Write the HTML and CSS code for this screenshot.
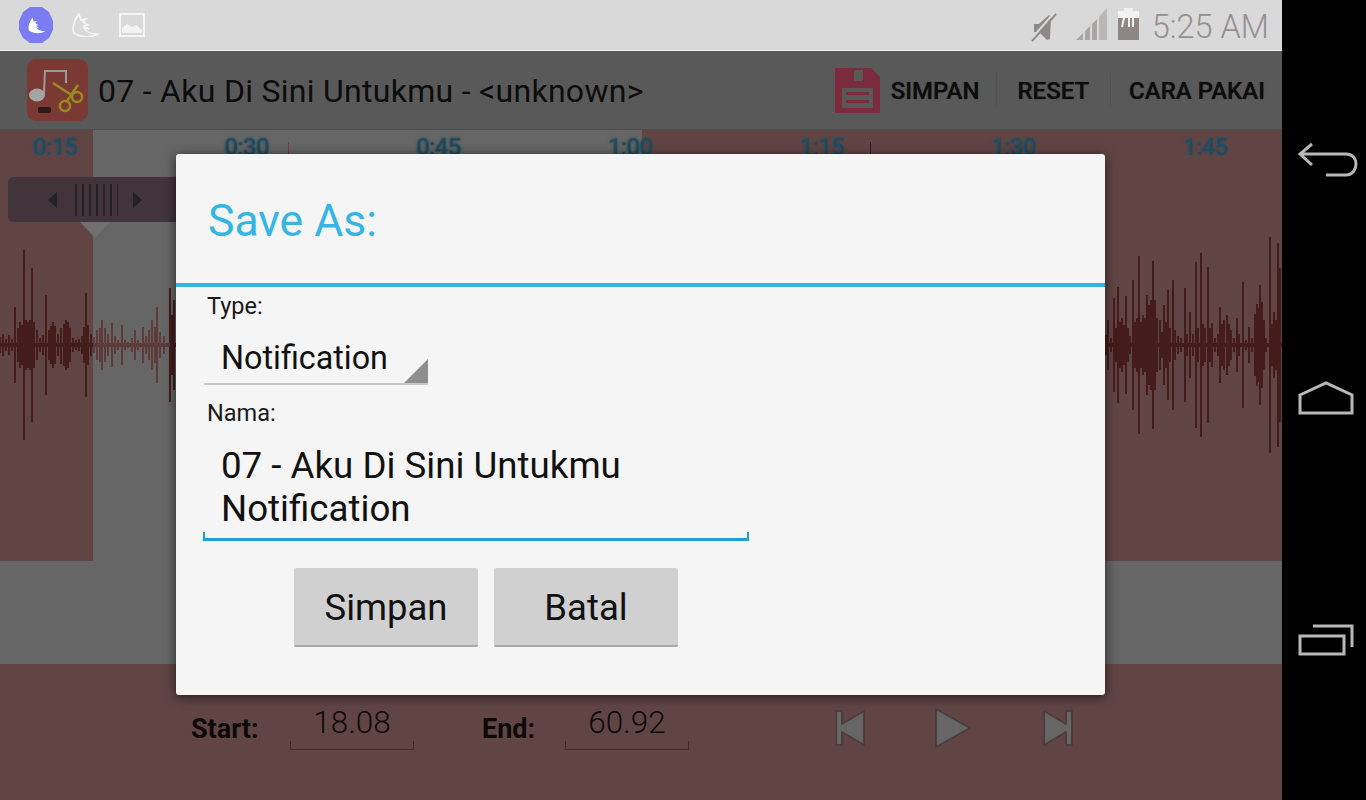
FILE: index.html
```html
<html>

<head>
  <link rel="stylesheet" href="styles.css">
</head>

<body>
  <div class="screen">
    <div class="status-bar">
      <div class="status-left">
        <svg class="notif-badge" viewBox="0 0 34 36">
          <path fill="#7c7cf2" d="M11 0h12l7 5 4 9v9l-4 8-7 5H11l-7-5-4-8v-9l4-9z" />
          <path fill="#fff" transform="translate(8 10) scale(.68)" d="M8 1C3 8 1 15 3 20c7 5 17 5 24 1-7 0-12-2-14-6l5 1-5-3 4-1-5-3 3-3-5 1z" />
        </svg>
        <svg class="notif-bird" viewBox="0 0 28 24">
          <path fill="none" stroke="#f4f4f4" stroke-width="1.6" d="M8 1C3 8 1 15 3 20c7 5 17 5 24 1-7 0-12-2-14-6l5 1-5-3 4-1-5-3 3-3-5 1z" />
        </svg>
        <svg class="notif-image" viewBox="0 0 26 24">
          <rect x="1" y="1" width="24" height="22" fill="none" stroke="#f4f4f4" stroke-width="2" />
          <path fill="#f4f4f4" d="M3 20v-5l5-4 5 3 4-2 6 5v3z" />
        </svg>
      </div>
      <div class="status-right">
        <svg class="icon-mute" viewBox="0 0 26 30">
          <path fill="#8f8888" d="M3 12h5l10-9 2 2-1 22-3 1-8-8H3z" />
          <path stroke="#8f8888" stroke-width="2" d="M1 29 25 2" />
          <path stroke="#d9d9d9" stroke-width="2" d="M1 26 23 1" />
        </svg>
        <svg class="icon-signal" viewBox="0 0 31 32">
          <path fill="#aaa5a5" d="M0 32 7 25v7zM9 23l5-5v14H9zM16 16l5-5v21h-5z" />
          <path fill="#bbb7b7" d="M23 9l8-9v32h-8z" />
        </svg>
        <svg class="icon-battery" viewBox="0 0 21 32">
          <path fill="#f2f2f2" d="M6 0h9v3h6v7H0V3h6z" />
          <path fill="#8e8585" d="M0 10h21v22H0z" />
          <path stroke="#f2f2f2" stroke-width="2" d="M6 10 4 19M11 10v9M15 10v9" />
        </svg>
        <span class="clock">5:25 AM</span>
      </div>
    </div>

    <div class="action-bar">
      <svg class="app-icon" viewBox="0 0 61 62">
        <rect width="61" height="62" rx="9" fill="#7b3933" />
        <path fill="none" stroke="#9b9b9b" stroke-width="2" d="M17 34 18 12h21v12" />
        <ellipse cx="10" cy="36" rx="8" ry="6.5" fill="#a5a5a5" />
        <path fill="none" stroke="#9a8a20" stroke-width="2.5" d="M26 24 46 37M51 26 40 42" />
        <circle cx="38" cy="47" r="5" fill="none" stroke="#9a8a20" stroke-width="2.5" />
        <circle cx="50" cy="38" r="5" fill="none" stroke="#9a8a20" stroke-width="2.5" />
        <rect x="11" y="48" width="13" height="6" rx="2" fill="#2c1a18" />
      </svg>
      <div class="track-title">07 - Aku Di Sini Untukmu - &lt;unknown&gt;</div>
      <div class="actions">
        <svg class="save-icon" viewBox="0 0 45 45">
          <path fill="#7b2b3b" d="M0 0h36l9 9v36H0z" />
          <rect x="19" y="2" width="9" height="11" fill="#595959" />
          <rect x="7" y="20" width="31" height="20" fill="#595959" />
          <rect x="11" y="24" width="23" height="3" fill="#7b2b3b" />
          <rect x="11" y="32" width="23" height="3" fill="#7b2b3b" />
        </svg>
        <button class="action-btn btn-save">SIMPAN</button>
        <button class="action-btn btn-reset">RESET</button>
        <button class="action-btn btn-help">CARA PAKAI</button>
      </div>
    </div>

    <div class="main">
      <div class="wave-area">
        <div class="region-off first"></div>
        <div class="region-on"></div>
        <div class="region-off"></div>

        <div class="time-labels">
          <span>0:15</span><span>0:30</span><span>0:45</span><span>1:00</span><span>1:15</span><span>1:30</span><span>1:45</span>
        </div>
        <div class="tick tick-a"></div>
        <div class="tick tick-b"></div>

        <svg class="waveform" viewBox="0 0 1282 431">
          <path class="wave-dark" d="M0 207V223M3 204V226M6 209V221M9 205V225M12 209V221M15 177V253M18 198V232M20 192V238M22 195V235M24 120V310M26 190V240M28 192V238M30 190V240M32 138V292M34 192V238M37 200V230M40 208V222M43 205V225M46 165V265M49 200V230M51 196V234M53 192V238M55 196V234M58 204V226M61 198V234M64 194V236M66 190V240M68 192V238M70 198V232M73 208V222M76 210V220M79 209V221M82 206V224M84 197V233M86 163V267M88 195V235M91 204V226" />
          <path class="wave-light" d="M94 207V223M97 200V230M100 198V232M102 190V240M105 198V232M108 204V226M112 193V237M115 206V224M118 210V220M122 195V235M125 210V220M128 212V218M132 208V222M135 200V230M138 210V220M143 197V233M146 206V224M149 200V230M152 190V240M155 197V233M157 177V253M160 202V228M164 206V224" />
          <path class="wave-dark" d="M170 158V272M172 185V245M174 170V260" />
          <path class="wave-dark" d="M1106 205V225M1108 190V240M1111 208V222M1114 168V262M1116 198V232M1118 157V273M1120 192V238M1122 188V242M1124 195V235M1126 166V264M1128 198V232M1130 206V224M1133 150V280M1135 192V238M1137 188V242M1139 126V304M1141 192V238M1143 185V245M1145 188V242M1147 165V265M1149 175V255M1151 170V260M1153 131V299M1155 170V260M1157 188V242M1160 190V240M1162 202V228M1164 175V255M1166 192V238M1168 160V270M1170 198V232M1173 150V280M1175 200V230M1178 206V224M1181 208V222M1185 158V272M1187 204V226M1190 182V248M1193 204V226M1196 132V298M1198 198V232M1201 123V307M1203 194V236M1205 198V232M1208 137V293M1210 198V232M1212 193V237M1215 208V222M1218 204V226M1220 177V253M1222 194V236M1224 190V240M1227 185V245M1229 194V236M1231 200V230M1234 208V222M1237 188V242M1239 204V226M1243 152V278M1246 210V220M1249 197V233M1252 208V222M1255 184V246M1257 174V256M1259 178V252M1260 155V275M1262 172V258M1264 190V240M1266 208V222M1270 107V323M1272 194V236M1274 182V248M1276 190V240M1278 113V317M1280 138V292" />
          <path class="wave-mid" d="M0 215H93M170 215H176M1105 215H1282" />
          <path class="wave-mid-light" d="M93 215H170" />
        </svg>

        <div class="slider-handle">
          <span class="arrow-left"></span>
          <span class="grip"></span>
          <span class="arrow-right"></span>
        </div>
        <div class="handle-pointer"></div>
      </div>

      <div class="band"></div>

      <div class="controls">
        <label class="ctl-label start-label">Start:</label>
        <div class="ctl-field start-field">18.08</div>
        <label class="ctl-label end-label">End:</label>
        <div class="ctl-field end-field">60.92</div>
        <div class="transport">
          <svg class="transport-btn" viewBox="0 0 32 38">
            <path class="transport-shape" d="M2 2h6v13L30 2v34L8 23v13H2z" />
          </svg>
          <svg class="transport-btn play" viewBox="0 0 38 42">
            <path class="transport-shape" d="M2 2 36 21 2 40z" />
          </svg>
          <svg class="transport-btn" viewBox="0 0 32 38">
            <path class="transport-shape" d="M30 2h-6v13L2 2v34l22-13v13h6z" />
          </svg>
        </div>
      </div>
    </div>

    <div class="dialog">
      <div class="dialog-title">Save As:</div>
      <div class="dialog-body">
        <div class="field-label">Type:</div>
        <div class="spinner">Notification</div>
        <div class="field-label name-label">Nama:</div>
        <div class="edit-text">07 - Aku Di Sini Untukmu<br>Notification</div>
        <div class="dialog-buttons">
          <button class="dialog-btn">Simpan</button>
          <button class="dialog-btn">Batal</button>
        </div>
      </div>
    </div>
  </div>

  <div class="nav-bar">
    <svg class="nav-back" viewBox="0 0 60 36">
      <path fill="none" stroke="#b8b8b8" stroke-width="3" d="M14 2 2 12l12 11M3 12h45c7 0 10 5 10 10s-3 11-10 11H28" />
    </svg>
    <svg class="nav-home" viewBox="0 0 56 34">
      <path fill="none" stroke="#b8b8b8" stroke-width="3" d="M2 14 28 2l26 12v18H2z" />
    </svg>
    <svg class="nav-recent" viewBox="0 0 56 32">
      <path fill="none" stroke="#b8b8b8" stroke-width="3" d="M15 2h39v21M2 12h44v18H2z" />
    </svg>
  </div>
</body>

</html>
```

FILE: styles.css
```css
body {
  margin: 0;
  width: 1366px;
  height: 800px;
  display: flex;
  overflow: hidden;
  font-family: Roboto, "Liberation Sans", sans-serif;
  background-color: black;
}

.screen {
  position: relative;
  width: 1282px;
  height: 800px;
  display: flex;
  flex-direction: column;
}

/* status bar */
.status-bar {
  height: 51px;
  box-sizing: border-box;
  background-color: #d9d9d9;
  border-bottom: 1px solid #efefef;
  display: flex;
  justify-content: space-between;
  align-items: center;
}

.status-left {
  display: flex;
  align-items: center;
  padding-left: 19px;
}

.notif-badge {
  width: 34px;
  height: 36px;
}

.notif-bird {
  width: 28px;
  height: 24px;
  margin-left: 18px;
}

.notif-image {
  width: 26px;
  height: 24px;
  margin-left: 20px;
}

.status-right {
  display: flex;
  align-items: center;
  padding-right: 13px;
}

.icon-mute {
  width: 26px;
  height: 30px;
  margin-top: 3px;
}

.icon-signal {
  width: 31px;
  height: 32px;
  margin-left: 19px;
  margin-top: -2px;
}

.icon-battery {
  width: 21px;
  height: 32px;
  margin-left: 11px;
  margin-top: -2px;
}

.clock {
  margin-left: 13px;
  padding-top: 3px;
  font-size: 32.5px;
  font-weight: 300;
  color: #958f8f;
}

/* action bar */
.action-bar {
  height: 79px;
  box-sizing: border-box;
  background-color: #595959;
  border-bottom: 1px solid #4c4c4c;
  display: flex;
  align-items: center;
  padding-left: 27px;
}

.app-icon {
  width: 61px;
  height: 62px;
}

.track-title {
  margin-left: 10px;
  padding-top: 2px;
  font-size: 32px;
  color: #0c0c0c;
  letter-spacing: 0.28px;
  white-space: nowrap;
}

.actions {
  margin-left: auto;
  display: flex;
  align-items: center;
  height: 100%;
  padding-right: 17px;
}

.save-icon {
  width: 45px;
  height: 45px;
  margin-right: 11px;
}

.action-btn {
  background: none;
  border: none;
  padding: 2px 0 0;
  font-family: inherit;
  font-size: 24px;
  font-weight: 500;
  color: #0c0c0c;
  text-shadow: 0 0 1px rgba(0, 0, 0, 0.6);
  height: 34px;
}

.btn-reset,
.btn-help {
  border-left: 1px solid #525252;
}

.btn-reset {
  margin-left: 17px;
  padding-left: 20px;
}

.btn-help {
  margin-left: 21px;
  padding-left: 18px;
}

/* waveform area */
.main {
  flex: 1;
  display: flex;
  flex-direction: column;
}

.wave-area {
  position: relative;
  height: 431px;
  display: flex;
  background-color: #614545;
}

.region-off {
  flex: 1;
}

.region-off.first {
  flex: none;
  width: 93px;
}

.region-on {
  width: 549px;
  background-color: #666666;
}

.time-labels {
  position: absolute;
  top: 3px;
  left: -41px;
  display: flex;
}

.time-labels span {
  width: 191.7px;
  text-align: center;
  font-size: 24px;
  font-weight: 500;
  letter-spacing: -0.7px;
  color: #1f4c60;
  text-shadow: 0 0 3px #2d4a55;
}

.tick {
  position: absolute;
  top: 12px;
  width: 1px;
  height: 13px;
  background-color: #7d3a3a;
}

.tick-a {
  left: 288px;
}

.tick-b {
  left: 870px;
  background-color: #3a1414;
}

.waveform {
  position: absolute;
  top: 0;
  left: 0;
  width: 1282px;
  height: 431px;
}

.wave-dark {
  fill: none;
  stroke: #451c1c;
  stroke-width: 2;
}

.wave-light {
  fill: none;
  stroke: #5f3a3a;
  stroke-width: 2;
}

.wave-mid {
  fill: none;
  stroke: #451c1c;
  stroke-width: 4;
}

.wave-mid-light {
  fill: none;
  stroke: #5f3a3a;
  stroke-width: 4;
}

.slider-handle {
  position: absolute;
  top: 47px;
  left: 8px;
  width: 190px;
  height: 45px;
  box-sizing: border-box;
  background-color: #41343a;
  border-radius: 5px;
  display: flex;
  align-items: center;
  padding-left: 40px;
}

.arrow-left {
  width: 0;
  height: 0;
  border-top: 8px solid transparent;
  border-bottom: 8px solid transparent;
  border-right: 9px solid #262024;
}

.arrow-right {
  width: 0;
  height: 0;
  margin-left: 15px;
  border-top: 8px solid transparent;
  border-bottom: 8px solid transparent;
  border-left: 9px solid #262024;
}

.grip {
  width: 43px;
  height: 32px;
  margin-left: 18px;
  background: repeating-linear-gradient(90deg, #262024 0 2px, transparent 2px 7px);
}

.handle-pointer {
  position: absolute;
  top: 92px;
  left: 80px;
  width: 0;
  height: 0;
  border-left: 15px solid transparent;
  border-right: 15px solid transparent;
  border-top: 16px solid #707070;
}

.band {
  height: 103px;
  background-color: #666666;
}

/* start / end row */
.controls {
  flex: 1;
  background-color: #614545;
  position: relative;
  display: flex;
  padding-left: 191px;
}

.ctl-label {
  font-size: 27px;
  font-weight: 700;
  color: #0d0909;
  margin-top: 49px;
  height: 32px;
}

.start-label {
  width: 99px;
}

.end-label {
  width: 83px;
  margin-left: 68px;
}

.ctl-field {
  width: 124px;
  height: 47px;
  box-sizing: border-box;
  margin-top: 39px;
  padding-top: 1px;
  font-size: 31.5px;
  font-weight: 300;
  line-height: 38px;
  text-align: center;
  color: #0d0909;
  border: 1px solid #3f2d2d;
  border-top: none;
  border-image: linear-gradient(to bottom, transparent 82%, #3f2d2d 82%) 1;
}

.transport {
  display: flex;
  align-items: center;
  margin-left: 145px;
  margin-top: 42px;
  height: 44px;
}

.transport-btn {
  width: 32px;
  height: 38px;
}

.transport-btn.play {
  width: 38px;
  height: 42px;
  margin-left: 68px;
  margin-right: 70px;
}

.transport-shape {
  fill: #666666;
  stroke: #4d3d3d;
  stroke-width: 2;
  stroke-linejoin: round;
}

/* dialog */
.dialog {
  position: absolute;
  top: 154px;
  left: 176px;
  width: 929px;
  height: 541px;
  background-color: #f5f5f5;
  border-radius: 3px;
  box-shadow: 0 2px 12px rgba(0, 0, 0, 0.65);
}

.dialog-title {
  height: 133px;
  box-sizing: border-box;
  padding: 41px 0 0 32px;
  font-size: 44.5px;
  line-height: 52px;
  color: #33b5e5;
  border-bottom: 4px solid #33b5e5;
}

.dialog-body {
  padding: 4px 0 0 28px;
}

.field-label {
  padding-left: 3px;
  font-size: 23.5px;
  line-height: 30px;
  color: #1a1a1a;
}

.name-label {
  margin-top: 13px;
}

.spinner {
  position: relative;
  width: 224px;
  height: 64px;
  box-sizing: border-box;
  padding: 17px 0 0 17px;
  font-size: 32.3px;
  line-height: 40px;
  color: #111111;
  border-bottom: 2px solid #c8c8c8;
}

.spinner::after {
  content: "";
  position: absolute;
  right: 0;
  bottom: 0;
  width: 0;
  height: 0;
  border-left: 24px solid transparent;
  border-bottom: 24px solid #8e8e8e;
}

.edit-text {
  position: relative;
  width: 546px;
  height: 113px;
  box-sizing: border-box;
  margin-left: -1px;
  padding: 16px 0 0 18px;
  font-size: 36.7px;
  line-height: 43px;
  color: #111111;
  white-space: nowrap;
  border-bottom: 3px solid #1c9fd6;
}

.edit-text::before,
.edit-text::after {
  content: "";
  position: absolute;
  bottom: 0;
  width: 2px;
  height: 6px;
  background-color: #1c9fd6;
}

.edit-text::before {
  left: 0;
}

.edit-text::after {
  right: 0;
}

.dialog-buttons {
  display: flex;
  gap: 16px;
  margin: 27px 0 0 90px;
}

.dialog-btn {
  width: 184px;
  height: 79px;
  padding: 2px 0 0;
  border: none;
  border-radius: 2px;
  border-bottom: 2px solid #a8a8a8;
  background-color: #d0d0d0;
  font-family: inherit;
  font-size: 36.5px;
  color: #111111;
}

/* navigation bar */
.nav-bar {
  width: 84px;
  height: 800px;
  box-sizing: border-box;
  padding: 142px 0 0 16px;
  display: flex;
  flex-direction: column;
  background-color: black;
}

.nav-back {
  width: 60px;
  height: 36px;
}

.nav-home {
  width: 56px;
  height: 34px;
  margin-top: 203px;
}

.nav-recent {
  width: 56px;
  height: 32px;
  margin-top: 209px;
}
```
